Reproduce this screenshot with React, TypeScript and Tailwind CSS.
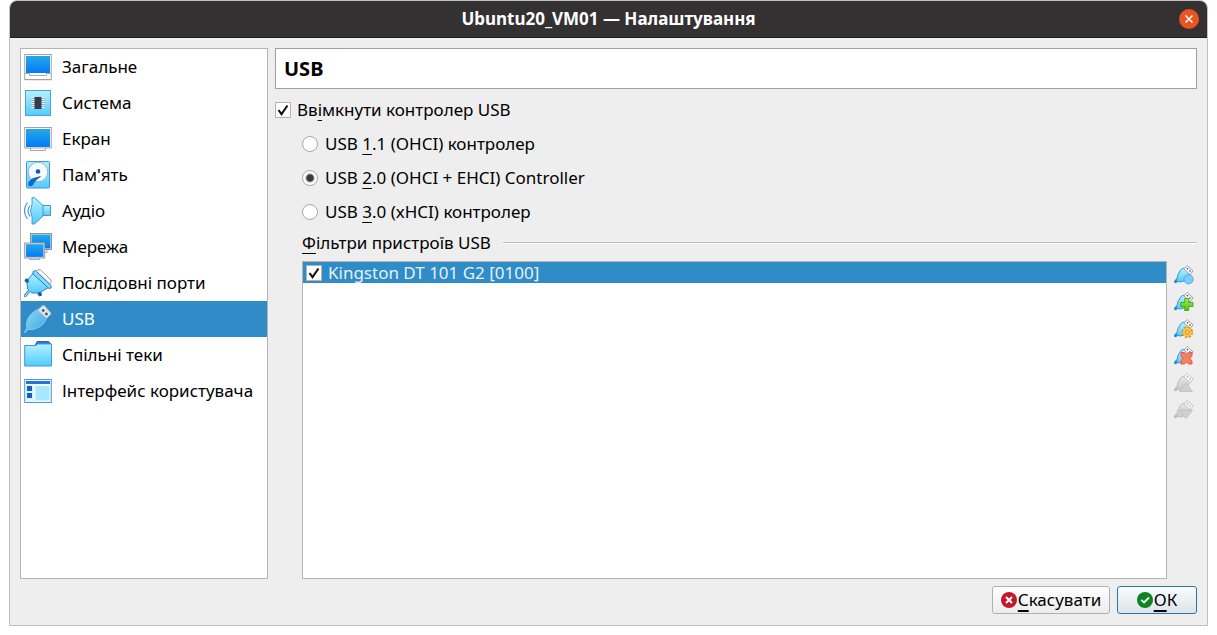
import { useState, type ReactNode } from "react";

function Defs() {
  return (
    <svg width="0" height="0" className="absolute" aria-hidden="true">
      <defs>
        <linearGradient id="screen" x1="0" y1="0" x2="0" y2="1">
          <stop offset="0" stopColor="#27a8e6" />
          <stop offset="1" stopColor="#027cf7" />
        </linearGradient>
        <linearGradient id="sky" x1="0" y1="0" x2="0" y2="1">
          <stop offset="0" stopColor="#b4f1ff" />
          <stop offset="1" stopColor="#52ccfb" />
        </linearGradient>
        <linearGradient id="plug" x1="0" y1="0" x2="1" y2="1">
          <stop offset="0" stopColor="#8fd6f6" />
          <stop offset="1" stopColor="#3fa9e2" />
        </linearGradient>
        <linearGradient id="dull" x1="0" y1="0" x2="0" y2="1">
          <stop offset="0" stopColor="#e6e6e6" />
          <stop offset="1" stopColor="#c9c9c9" />
        </linearGradient>
        <linearGradient id="green" x1="0" y1="0" x2="0" y2="1">
          <stop offset="0" stopColor="#a6ee4c" />
          <stop offset="1" stopColor="#4fbf16" />
        </linearGradient>
      </defs>
    </svg>
  );
}

function Icon({ children }: { children: ReactNode }) {
  return (
    <svg viewBox="0 0 28 28" className="h-7 w-7 shrink-0" aria-hidden="true">
      {children}
    </svg>
  );
}

const GeneralIcon = (
  <Icon>
    <rect x="1" y="26.500" width="27" height="1" fill="#d5d5d5" />
    <rect x=".75" y="1.500" width="26.500" height="25" fill="#fff" stroke="#a2a2a2" />
    <rect x="2" y="3" width="24" height="17" fill="url(#screen)" />
    <path d="M1 20.500h4.500v2h17v-2h4.500" fill="none" stroke="#adadad" />
  </Icon>
);

const SystemIcon = (
  <Icon>
    <rect x="1.500" y="1.500" width="25" height="25" fill="url(#sky)" stroke="#4d9fe2" />
    <path d="M7 8.500h4M7 10.500h4M7 12.500h4M7 14.500h4M7 16.500h4M7 18.500h4M17 8.500h4M17 10.500h4M17 12.500h4M17 14.500h4M17 16.500h4M17 18.500h4" stroke="#e9f4fa" />
    <path d="M7 9.500h4M7 11.500h4M7 13.500h4M7 15.500h4M7 17.500h4M17 9.500h4M17 11.500h4M17 13.500h4M17 15.500h4M17 17.500h4" stroke="#85b2cd" />
    <rect x="10.500" y="8" width="7" height="12" fill="#363d49" />
  </Icon>
);

const DisplayIcon = (
  <Icon>
    <path d="M6.500 23v2.500h15V23" fill="#fff" stroke="#a6a6a6" />
    <rect x=".75" y="2.500" width="26.500" height="20.500" fill="#fff" stroke="#a2a2a2" />
    <rect x="2" y="4" width="24" height="18" fill="url(#screen)" />
  </Icon>
);

const StorageIcon = (
  <Icon>
    <rect x="2.500" y=".5" width="23" height="26.500" rx="1" fill="url(#sky)" stroke="#4195dd" />
    <circle cx="14" cy="11" r="9.800" fill="#f5fbff" stroke="#8fb9d4" />
    <circle cx="14" cy="10.500" r="2.300" fill="#0d57b5" />
    <path d="M16.500 15.500L9 17.500Q4 20 4.500 24q1.500 2 4 0Q10 20 16.500 15.500z" fill="#0c6ad4" stroke="#1452a0" strokeWidth=".7" />
  </Icon>
);

const AudioIcon = (
  <Icon>
    <path d="M3.500 5.500Q-2.500 13.500 3.500 22M6 8.500Q2 13.500 6 19.500" fill="none" stroke="#4199df" strokeWidth="1.200" />
    <path d="M17.500 8.500h9v10h-9z" fill="url(#sky)" stroke="#428bc4" strokeWidth=".9" />
    <path d="M8 .7h2.500L19 8.500v10.500L10.500 27H8Q9 21 6.500 14 9 6 8 .7z" fill="url(#sky)" stroke="#3690d5" strokeWidth=".9" />
  </Icon>
);

const NetworkIcon = (
  <Icon>
    <path d="M13 17v2.500h10V17" fill="#fff" stroke="#aaa" />
    <rect x="6.500" y=".5" width="21" height="16" fill="#eee" stroke="#929292" />
    <rect x="7.500" y="1.500" width="19" height="14" fill="url(#screen)" />
    <path d="M5.500 25v1.500h10V25" fill="#fff" stroke="#aaa" />
    <rect x=".7" y="10" width="20" height="15" fill="#eee" stroke="#999" />
    <rect x="2" y="11.200" width="17.500" height="12.700" fill="url(#screen)" />
  </Icon>
);

const SerialIcon = (
  <Icon>
    <path d="M12.500 2.500Q13.500-.5 16.500 1L27 11q1 2.500-1.500 4z" fill="#fff" stroke="#999" />
    <path d="M1 27l5-6" stroke="#3b93d8" strokeWidth="3" strokeLinecap="round" />
    <path d="M9.500 4L24.500 18.500 15 24H8L3.500 20 3 11.500z" fill="url(#sky)" stroke="#2e84cc" />
    <path d="M9 2.500l2.500-1L27 16.500v2.500l-2 .5L9 5z" fill="#7fdcff" stroke="#2e7cc4" />
    <path d="M1.300 26.800l5-6" stroke="#82d9ff" strokeWidth="1.300" strokeLinecap="round" />
    <path d="M1.500 9.500l3 .5.500 3-2.500 1-2-2zM14.500 23l3 .5.500 3-2.500 1-2-2z" fill="#195cb8" />
  </Icon>
);

const UsbIcon = (
  <Icon>
    <path d="M1 27l3-4" stroke="#80c7ec" strokeWidth="2" strokeLinecap="round" />
    <path d="M3 24.500Q1 16 6 10.500 10 5.500 14 4.500l8.500 9Q21 18 16.500 21.500 9 26 3 24.500z" fill="url(#plug)" stroke="#8dceef" strokeWidth=".8" />
    <path d="M13.500 5L18.500.7q1-.7 2 0l6 6.800q.7 1 0 2L22.500 13.500z" fill="#dfe6ea" stroke="#a3b6c2" strokeWidth=".8" />
    <path d="M18.300 4.600l1.800 1.800M21.500 8.100l1.800 1.800" stroke="#475260" strokeWidth="2.200" />
  </Icon>
);

const FolderIcon = (
  <Icon>
    <path d="M11 5l2-4.500h11.500L27 3v3H11z" fill="#2d78d5" stroke="#2669bd" />
    <path d="M.7 4.500h11l2-1.500h13.800v22H.7z" fill="url(#sky)" stroke="#3c9ae1" />
  </Icon>
);

const InterfaceIcon = (
  <Icon>
    <rect x=".7" y="2.500" width="26.600" height="23" fill="#f1fbff" stroke="#4697dd" />
    <rect x="2" y="4" width="24" height="3" fill="#2b72ce" />
    <rect x="2" y="8" width="8" height="16" fill="#d2f4ff" />
    <rect x="3" y="9" width="5" height="5" fill="#1c5dba" />
    <rect x="3" y="16" width="5" height="5" fill="#1c5dba" />
    <rect x="11.500" y="9" width="14" height="14.500" fill="#a5e8ff" />
  </Icon>
);

const categories = [
  { label: "Загальне", icon: GeneralIcon },
  { label: "Система", icon: SystemIcon },
  { label: "Екран", icon: DisplayIcon },
  { label: "Пам'ять", icon: StorageIcon },
  { label: "Аудіо", icon: AudioIcon },
  { label: "Мережа", icon: NetworkIcon },
  { label: "Послідовні порти", icon: SerialIcon },
  { label: "USB", icon: UsbIcon },
  { label: "Спільні теки", icon: FolderIcon },
  { label: "Інтерфейс користувача", icon: InterfaceIcon },
];

function FilterIcon({ dim, children }: { dim?: boolean; children: ReactNode }) {
  return (
    <svg viewBox="0 0 20 20" className="h-5 w-5" aria-hidden="true">
      <path d="M1.500 16.700L3 15" stroke={dim ? "#bbb" : "#2f86ca"} strokeWidth="3" strokeLinecap="round" />
      <path d="M2.500 16Q3 9 7 4.500 9 3 10.500 3.300L16 9Q14 14 10 16q-4 2-7.500 0z" fill={dim ? "url(#dull)" : "url(#sky)"} stroke={dim ? "#bcbcbc" : "#398ccb"} strokeWidth=".9" />
      <path d="M9.800 3.800L13.300.6 19 5.800 16.200 9.800z" fill="#fafafa" stroke={dim ? "#bdbdbd" : "#999"} strokeWidth=".9" />
      <path d="M13 3.200l1 1M15.500 5.600l1 1" stroke={dim ? "#aaa" : "#444"} strokeWidth="1.400" />
      {children}
    </svg>
  );
}

const filterActions = [
  {
    label: "Додати порожній фільтр",
    icon: (
      <FilterIcon>
        <circle cx="14.500" cy="14.300" r="4.600" fill="#7dceff" stroke="#4ba4e0" strokeWidth=".9" />
      </FilterIcon>
    ),
  },
  {
    label: "Додати фільтр із пристрою",
    icon: (
      <FilterIcon>
        <path d="M10.700 6.500h4v4h4.300v4h-4.300v4h-4v-4H6.700v-4h4z" fill="url(#green)" stroke="#45a51b" strokeWidth=".9" />
      </FilterIcon>
    ),
  },
  {
    label: "Змінити фільтр",
    icon: (
      <FilterIcon>
        <circle cx="13.300" cy="13.300" r="4.800" fill="#ffb92e" stroke="#e18a19" strokeWidth="2" strokeDasharray="2.200 1.570" />
        <circle cx="13.300" cy="13.300" r="4.500" fill="#ffc338" />
        <circle cx="13.300" cy="13.300" r="1.700" fill="#fff2cf" stroke="#d97e18" />
      </FilterIcon>
    ),
  },
  {
    label: "Вилучити фільтр",
    icon: (
      <FilterIcon>
        <path d="M7 6.500h3.500l2 2 2-2H18V10l-2 2.500 2 2.500v3h-3.500l-2-2-2 2H7v-3l2-2.500L7 10z" fill="#f78062" stroke="#e45038" strokeWidth=".9" />
      </FilterIcon>
    ),
  },
  {
    label: "Пересунути вгору",
    disabled: true,
    icon: (
      <FilterIcon dim>
        <path d="M12 10l6.500 8.500h-13z" fill="#d1d1d1" stroke="#bbb" strokeWidth=".8" />
      </FilterIcon>
    ),
  },
  {
    label: "Пересунути вниз",
    disabled: true,
    icon: (
      <FilterIcon dim>
        <path d="M12 18.500L5.500 10h13z" fill="#d1d1d1" stroke="#bbb" strokeWidth=".8" />
      </FilterIcon>
    ),
  },
];

function Key({ children }: { children: ReactNode }) {
  return <span className="underline decoration-1 underline-offset-4">{children}</span>;
}

function CheckBox({ id, checked, onChange }: { id: string; checked: boolean; onChange: (value: boolean) => void }) {
  return (
    <span className="relative flex h-4 w-4 shrink-0">
      <input
        id={id}
        type="checkbox"
        checked={checked}
        onChange={(e) => onChange(e.target.checked)}
        className="h-4 w-4 appearance-none border border-[#b4b4b4] bg-white"
      />
      {checked && (
        <svg viewBox="0 0 16 16" className="pointer-events-none absolute inset-0 h-4 w-4" aria-hidden="true">
          <path d="M3.500 8l3 4.200L12.500 3.500" fill="none" stroke="#111" strokeWidth="2.100" />
        </svg>
      )}
    </span>
  );
}

const controllers = [
  { id: "usb1", key: "1", rest: ".1 (OHCI) контролер" },
  { id: "usb2", key: "2", rest: ".0 (OHCI + EHCI) Controller" },
  { id: "usb3", key: "3", rest: ".0 (xHCI) контролер" },
];

export default function App() {
  const [category, setCategory] = useState("USB");
  const [enabled, setEnabled] = useState(true);
  const [controller, setController] = useState("usb2");
  const [filterOn, setFilterOn] = useState(true);

  return (
    <div className="flex min-h-screen flex-col bg-white px-[9px] pb-[9px] font-['Noto_Sans',sans-serif] text-[17px] leading-6 text-black">
      <Defs />
      <div className="flex grow flex-col overflow-hidden rounded-t-lg border border-[#bfbfbf] bg-[#eeeeee]">
        <header className="flex h-[37px] shrink-0 items-center border-b border-[#1e1d1e] bg-[#333132] px-2">
          <span className="w-5" />
          <h1 className="grow text-center font-bold text-white">Ubuntu20_VM01 — Налаштування</h1>
          <button type="button" aria-label="Закрити" className="flex h-5 w-5 items-center justify-center rounded-full bg-[#e95420]">
            <svg viewBox="0 0 10 10" className="h-[10px] w-[10px]" aria-hidden="true">
              <path d="M1.500 1.500l7 7M8.500 1.500l-7 7" stroke="#fff" strokeWidth="1.500" />
            </svg>
          </button>
        </header>

        <main className="flex grow gap-[7px] px-[10px] pt-[10px]">
          <nav className="w-[248px] shrink-0 border border-[#b4b4b4] bg-white">
            {categories.map(({ label, icon }) => (
              <button
                key={label}
                type="button"
                onClick={() => setCategory(label)}
                className={
                  category === label
                    ? "flex h-9 w-full items-center gap-[10px] bg-[#308cc6] pl-[3px] whitespace-nowrap text-white"
                    : "flex h-9 w-full items-center gap-[10px] pl-[3px] whitespace-nowrap"
                }
              >
                {icon}
                {label}
              </button>
            ))}
          </nav>

          <section className="flex grow flex-col">
            <h2 className="mb-1 flex h-[41px] items-center border border-[#9f9f9f] bg-white px-2 text-[20px] font-bold">USB</h2>
            <div className="flex h-[34px] items-center gap-[6px]">
              <CheckBox id="enable" checked={enabled} onChange={setEnabled} />
              <label htmlFor="enable">
                Вв<Key>і</Key>мкнути контролер USB
              </label>
            </div>

            <div className="flex grow flex-col pl-[27px]">
              {controllers.map(({ id, key, rest }) => (
                <div key={id} className="flex h-[34px] items-center gap-[7px]">
                  <input
                    id={id}
                    type="radio"
                    name="controller"
                    checked={controller === id}
                    onChange={() => setController(id)}
                    className="h-4 w-4 appearance-none rounded-full border border-[#a8a8a8] bg-white checked:bg-[radial-gradient(circle,#3b3b3b_3px,#fff_5px)]"
                  />
                  <label htmlFor={id}>
                    USB <Key>{key}</Key>
                    {rest}
                  </label>
                </div>
              ))}

              <div className="mb-1 flex h-7 items-center gap-3">
                <h3>
                  <Key>Ф</Key>ільтри пристроїв USB
                </h3>
                <span className="h-[2px] grow border-t border-b border-t-[#bdbdbd] border-b-white" />
              </div>

              <div className="flex grow gap-[7px] pr-[3px]">
                <ul className="grow border border-[#b4b4b4] bg-white">
                  <li className="flex h-[21px] items-center gap-[6px] bg-[#308cc6] pl-[3px] leading-5 text-[#e4f1f9]">
                    <CheckBox id="filter" checked={filterOn} onChange={setFilterOn} />
                    <label htmlFor="filter">Kingston DT 101 G2 [0100]</label>
                  </li>
                </ul>
                <div className="flex flex-col gap-[7px] pt-1">
                  {filterActions.map(({ label, icon, disabled }) => (
                    <button key={label} type="button" aria-label={label} disabled={disabled} className="h-5 w-5">
                      {icon}
                    </button>
                  ))}
                </div>
              </div>
            </div>
          </section>
        </main>

        <footer className="flex justify-end gap-[7px] px-[10px] pt-[7px] pb-[11px]">
          <button type="button" className="flex h-7 w-[118px] items-center justify-center gap-px rounded-[3px] border border-[#b0b0b0] bg-linear-to-b from-white to-[#ececec]">
            <svg viewBox="0 0 16 16" className="h-4 w-4 shrink-0" aria-hidden="true">
              <circle cx="8" cy="8" r="8" fill="#c6162e" />
              <path d="M5 5l6 6M11 5l-6 6" stroke="#fff" strokeWidth="2" />
            </svg>
            <span>
              <span className="underline decoration-2 underline-offset-4">С</span>касувати
            </span>
          </button>
          <button type="button" className="flex h-7 w-20 items-center justify-center gap-px rounded-[3px] border border-[#2b76a8] bg-linear-to-b from-[#fafcfd] to-[#dbe4ea]">
            <svg viewBox="0 0 16 16" className="h-4 w-4 shrink-0" aria-hidden="true">
              <circle cx="8" cy="8" r="8" fill="#0e8420" />
              <path d="M4.200 7.800l2.800 2.700 5-5" fill="none" stroke="#fff" strokeWidth="1.800" />
            </svg>
            <span>
              <span className="underline decoration-2 underline-offset-4">О</span>К
            </span>
          </button>
        </footer>
      </div>
    </div>
  );
}
